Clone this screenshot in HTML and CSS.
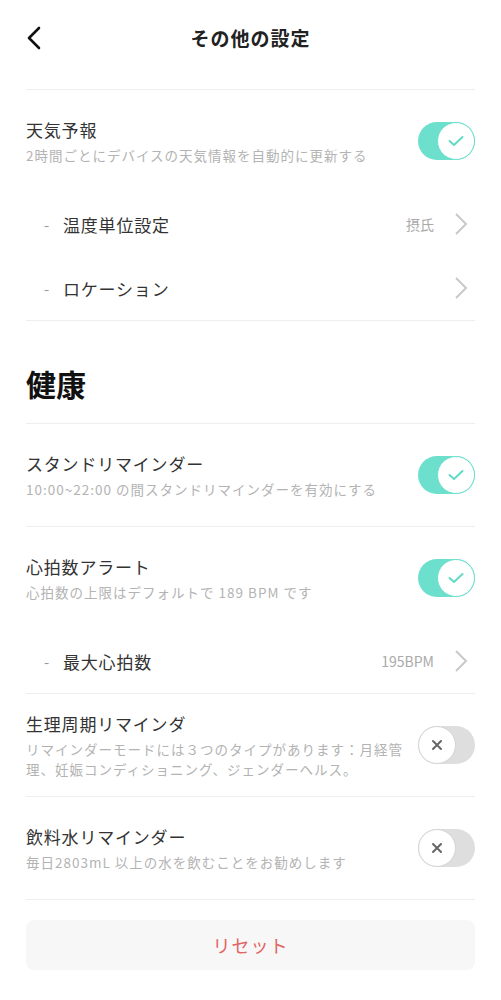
FILE: index.html
```html
<!DOCTYPE html>
<html lang="ja">
<head>
    <meta charset="UTF-8">
    <meta name="viewport" content="width=device-width, initial-scale=1.0">
    <title>その他の設定</title>
    <link rel="stylesheet" href="styles.css">
</head>
<body>
    <div class="page">
        <div class="header">
            <svg class="back" width="16" height="24" viewBox="0 0 16 24">
                <path d="M13 2 L3 12 L13 22" fill="none" stroke="#111" stroke-width="2.6" stroke-linecap="round" stroke-linejoin="round"/>
            </svg>
            <h1 class="title">その他の設定</h1>
        </div>

        <div class="group">
            <div class="row">
                <div class="text">
                    <div class="name">天気予報</div>
                    <div class="desc">2時間ごとにデバイスの天気情報を自動的に更新する</div>
                </div>
                <div class="toggle on"><span class="knob"><svg width="16" height="12" viewBox="0 0 16 12"><path d="M1.5 6 L6 10 L14.5 2" fill="none" stroke="#62dac6" stroke-width="2" stroke-linecap="round" stroke-linejoin="round"/></svg></span></div>
            </div>
            <div class="sub-row">
                <span class="dash">-</span>
                <span class="sub-name">温度単位設定</span>
                <span class="value">摂氏</span>
                <svg class="chevron" width="14" height="24" viewBox="0 0 14 24"><path d="M2 2 L12 12 L2 22" fill="none" stroke="#c9c9c9" stroke-width="2"/></svg>
            </div>
            <div class="sub-row">
                <span class="dash">-</span>
                <span class="sub-name">ロケーション</span>
                <svg class="chevron" width="14" height="24" viewBox="0 0 14 24"><path d="M2 2 L12 12 L2 22" fill="none" stroke="#c9c9c9" stroke-width="2"/></svg>
            </div>
        </div>

        <div class="group">
            <h2 class="section">健康</h2>
        </div>

        <div class="group">
            <div class="row">
                <div class="text">
                    <div class="name">スタンドリマインダー</div>
                    <div class="desc">10:00~22:00 の間スタンドリマインダーを有効にする</div>
                </div>
                <div class="toggle on"><span class="knob"><svg width="16" height="12" viewBox="0 0 16 12"><path d="M1.5 6 L6 10 L14.5 2" fill="none" stroke="#62dac6" stroke-width="2" stroke-linecap="round" stroke-linejoin="round"/></svg></span></div>
            </div>
        </div>

        <div class="group">
            <div class="row">
                <div class="text">
                    <div class="name">心拍数アラート</div>
                    <div class="desc">心拍数の上限はデフォルトで 189 BPM です</div>
                </div>
                <div class="toggle on"><span class="knob"><svg width="16" height="12" viewBox="0 0 16 12"><path d="M1.5 6 L6 10 L14.5 2" fill="none" stroke="#62dac6" stroke-width="2" stroke-linecap="round" stroke-linejoin="round"/></svg></span></div>
            </div>
            <div class="sub-row">
                <span class="dash">-</span>
                <span class="sub-name">最大心拍数</span>
                <span class="value">195BPM</span>
                <svg class="chevron" width="14" height="24" viewBox="0 0 14 24"><path d="M2 2 L12 12 L2 22" fill="none" stroke="#c9c9c9" stroke-width="2"/></svg>
            </div>
        </div>

        <div class="group">
            <div class="row">
                <div class="text">
                    <div class="name">生理周期リマインダ</div>
                    <div class="desc">リマインダーモードには３つのタイプがあります：月経管理、妊娠コンディショニング、ジェンダーヘルス。</div>
                </div>
                <div class="toggle"><span class="knob"><svg width="12" height="12" viewBox="0 0 12 12"><path d="M2 2 L10 10 M10 2 L2 10" fill="none" stroke="#666" stroke-width="2" stroke-linecap="round"/></svg></span></div>
            </div>
        </div>

        <div class="group">
            <div class="row">
                <div class="text">
                    <div class="name">飲料水リマインダー</div>
                    <div class="desc">毎日2803mL 以上の水を飲むことをお勧めします</div>
                </div>
                <div class="toggle"><span class="knob"><svg width="12" height="12" viewBox="0 0 12 12"><path d="M2 2 L10 10 M10 2 L2 10" fill="none" stroke="#666" stroke-width="2" stroke-linecap="round"/></svg></span></div>
            </div>
        </div>

        <button class="reset">リセット</button>
    </div>
</body>
</html>
```

FILE: styles.css
```css
body {
    margin: 0;
    background-color: #fff;
    font-family: "Noto Sans CJK JP", "Noto Sans", sans-serif;
    color: #333;
}

.page {
    padding: 0 26px;
}

.header {
    height: 90px;
    box-sizing: border-box;
    padding-bottom: 14px;
    border-bottom: 1px solid #eeeeee;
    display: flex;
    align-items: center;
    justify-content: center;
    position: relative;
}

.back {
    position: absolute;
    left: 0;
    top: 26px;
}

.title {
    margin: 0;
    font-size: 19px;
    font-weight: bold;
    letter-spacing: 1px;
    color: #222;
}

.group {
    border-bottom: 1px solid #eeeeee;
}

.row {
    height: 102px;
    display: flex;
    align-items: center;
    justify-content: space-between;
}

.text {
    max-width: 384px;
}

.name {
    font-size: 17px;
    letter-spacing: 0.8px;
    line-height: 24px;
    color: #333;
}

.desc {
    margin-top: 3px;
    font-size: 13.5px;
    letter-spacing: 1px;
    line-height: 20px;
    color: #b3b3b3;
}

.toggle {
    width: 57px;
    height: 38px;
    border-radius: 19px;
    background-color: #dedede;
    display: flex;
    flex-shrink: 0;
    justify-content: flex-start;
}

.toggle.on {
    background-color: #6de0cd;
    justify-content: flex-end;
}

.knob {
    width: 38px;
    height: 38px;
    box-sizing: border-box;
    border-radius: 50%;
    background-color: #fff;
    border: 1.5px solid #d4d4d4;
    display: flex;
    align-items: center;
    justify-content: center;
}

.toggle.on .knob {
    border-color: #6de0cd;
}

.sub-row {
    height: 64px;
    display: flex;
    align-items: center;
    padding-left: 18px;
}

.dash {
    color: #999;
    font-size: 15px;
    width: 19px;
}

.sub-name {
    flex: 1;
    font-size: 17px;
    letter-spacing: 0.8px;
    color: #333;
}

.value {
    font-size: 14px;
    color: #aaa;
    margin-right: 20px;
}

.chevron {
    margin-right: 7px;
}

.section {
    margin: 0;
    padding: 42px 0 20px;
    font-size: 30px;
    line-height: 40px;
    font-weight: bold;
    color: #111;
}

.reset {
    display: block;
    width: 100%;
    height: 50px;
    margin-top: 20px;
    border: none;
    border-radius: 8px;
    background-color: #f7f7f7;
    font-family: inherit;
    font-size: 18px;
    letter-spacing: 1px;
    color: #e06563;
}
```
